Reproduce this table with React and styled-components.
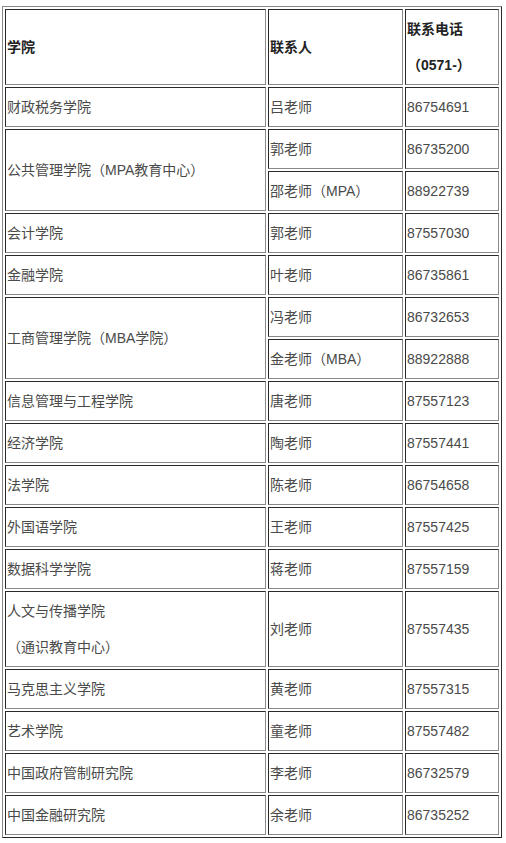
import React from "react";
import styled, { createGlobalStyle } from "styled-components";

const Global = createGlobalStyle`
  * { box-sizing: border-box; }
  html, body { margin: 0; padding: 0; background: #fff; }
  body {
    font-family: "Liberation Sans", "Noto Sans CJK SC", Arial, sans-serif;
    font-size: 14px;
  }
`;

const Page = styled.div`
  padding: 6px 0 0 2px;
`;

const Table = styled.table`
  width: 500px;
  table-layout: fixed;
  border-collapse: separate;
  border-spacing: 2px;
  border-style: solid;
  border-width: 1px;
  border-color: #888 #2a2a2a #2a2a2a #888;
`;

const cellBase = `
  border-style: solid;
  border-width: 1px;
  border-color: #2a2a2a #8a8a8a #8a8a8a #2a2a2a;
  padding: 1px;
  vertical-align: middle;
  text-align: left;
  line-height: 36px;
  white-space: nowrap;
`;

const HeadCell = styled.th`
  ${cellBase}
  font-weight: bold;
  color: #222;
`;

const Cell = styled.td`
  ${cellBase}
  font-weight: normal;
  color: #4a4a4a;
`;

const Line = styled.div`
  display: block;
  line-height: 36px;
`;

const rows = [
  { college: "财政税务学院", people: [["吕老师", "86754691"]] },
  {
    college: "公共管理学院（MPA教育中心）",
    people: [
      ["郭老师", "86735200"],
      ["邵老师（MPA）", "88922739"],
    ],
  },
  { college: "会计学院", people: [["郭老师", "87557030"]] },
  { college: "金融学院", people: [["叶老师", "86735861"]] },
  {
    college: "工商管理学院（MBA学院）",
    people: [
      ["冯老师", "86732653"],
      ["金老师（MBA）", "88922888"],
    ],
  },
  { college: "信息管理与工程学院", people: [["唐老师", "87557123"]] },
  { college: "经济学院", people: [["陶老师", "87557441"]] },
  { college: "法学院", people: [["陈老师", "86754658"]] },
  { college: "外国语学院", people: [["王老师", "87557425"]] },
  { college: "数据科学学院", people: [["蒋老师", "87557159"]] },
  {
    college: ["人文与传播学院", "（通识教育中心）"],
    people: [["刘老师", "87557435"]],
  },
  { college: "马克思主义学院", people: [["黄老师", "87557315"]] },
  { college: "艺术学院", people: [["童老师", "87557482"]] },
  { college: "中国政府管制研究院", people: [["李老师", "86732579"]] },
  { college: "中国金融研究院", people: [["余老师", "86735252"]] },
];

function CollegeText({ value }) {
  if (Array.isArray(value)) {
    return value.map((l) => <Line key={l}>{l}</Line>);
  }
  return value;
}

export default function App() {
  return (
    <Page>
      <Global />
      <Table>
        <colgroup>
          <col style={{ width: 261 }} />
          <col style={{ width: 135 }} />
          <col style={{ width: 94 }} />
        </colgroup>
        <tbody>
          <tr>
            <HeadCell>学院</HeadCell>
            <HeadCell>联系人</HeadCell>
            <HeadCell>
              <Line>联系电话</Line>
              <Line>（0571-）</Line>
            </HeadCell>
          </tr>
          {rows.map((r, i) =>
            r.people.map((p, j) => (
              <tr key={`${i}-${j}`}>
                {j === 0 && (
                  <Cell rowSpan={r.people.length}>
                    <CollegeText value={r.college} />
                  </Cell>
                )}
                <Cell>{p[0]}</Cell>
                <Cell>{p[1]}</Cell>
              </tr>
            ))
          )}
        </tbody>
      </Table>
    </Page>
  );
}
